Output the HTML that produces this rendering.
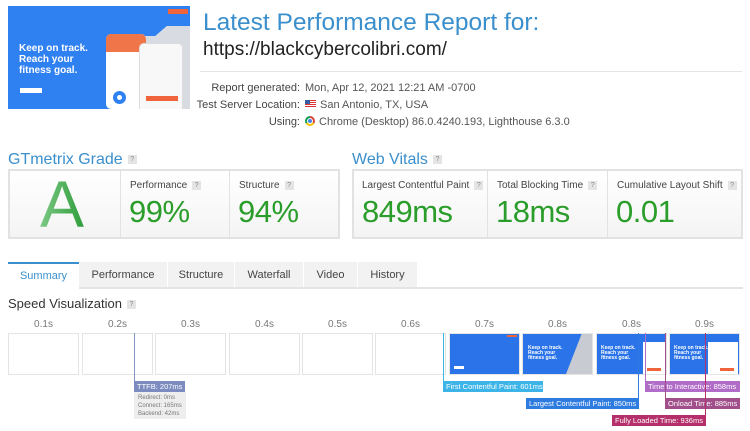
<!DOCTYPE html>
<html><head><meta charset="utf-8"><style>
*{box-sizing:border-box;margin:0;padding:0}
body{width:750px;height:431px;background:#fff;font-family:"Liberation Sans",sans-serif;position:relative;overflow:hidden;color:#333}
.a{position:absolute}
.q{display:inline-block;width:9px;height:9px;background:#e4e4e4;color:#888;font-size:7px;line-height:9px;text-align:center;vertical-align:middle;margin-left:5px}
.h{color:#3a8fcc;font-size:16px}
.box{border:2px solid #e2e2e2;background:linear-gradient(#fff,#f4f4f4)}
.cell{position:absolute;top:0;bottom:0;border-right:1px solid #e2e2e2}
.lbl{position:absolute;top:9px;left:9px;font-size:10px;color:#444;white-space:nowrap}
.val{position:absolute;top:23px;left:8px;font-size:31px;color:#2a9d2a;letter-spacing:-0.5px}
.tab{position:absolute;top:262px;height:26px;background:#f2f2f2;font-size:11px;color:#444;text-align:center;line-height:26px}
.fr{position:absolute;top:333px;height:42px;border:1px solid #e4e4e4;background:#fff;overflow:hidden}
.tl{position:absolute;top:319px;font-size:10px;color:#777;width:71px;text-align:center}
.mk{position:absolute;color:#fff;font-size:7.5px;height:11px;line-height:11px;padding:0 3px;white-space:nowrap;overflow:hidden}
.ln{position:absolute;width:1px}
.row{position:absolute;font-size:11px;color:#555;white-space:nowrap}
.row b{font-weight:normal;display:inline-block;width:110px;text-align:right;color:#444;margin-right:5px}
</style></head><body>
<div class="a" style="left:8px;top:6px;width:182px;height:103px;background:#2f80f0;overflow:hidden">
 <div class="a" style="left:120px;top:20px;width:62px;height:83px;background:#d8dce2"></div>
 <div class="a" style="left:95px;top:0;width:87px;height:30px;background:#2f80f0;clip-path:polygon(0 0,100% 0,100% 0,60% 100%,0 100%)"></div>
 <div class="a" style="left:160px;top:3px;width:20px;height:5px;background:#f0643c"></div>
 <div class="a" style="left:11px;top:37px;color:#fff;font-weight:bold;font-size:10px;line-height:11px">Keep on track.<br>Reach your<br>fitness goal.</div>
 <div class="a" style="left:12px;top:82px;width:22px;height:5px;background:#fff"></div>
 <div class="a" style="left:98px;top:28px;width:40px;height:75px;background:#fff;border-radius:5px"></div>
 <div class="a" style="left:98px;top:28px;width:40px;height:18px;background:#f0764a;border-radius:5px 5px 0 0"></div>
 <div class="a" style="left:131px;top:37px;width:44px;height:70px;background:#f8f8f8;border-radius:5px;border:1px solid #ddd"></div>
 <div class="a" style="left:138px;top:90px;width:32px;height:5px;background:#f0643c"></div>
 <div class="a" style="left:105px;top:85px;width:13px;height:13px;border:4px solid #2f80f0;border-radius:50%"></div>
</div>
<div class="a" style="left:203px;top:9px;font-size:24.5px;color:#3a8fcc;white-space:nowrap">Latest Performance Report for:</div>
<div class="a" style="left:203px;top:39px;font-size:19px;color:#222;white-space:nowrap">https://blackcybercolibri.com/</div>
<div class="a" style="left:200px;top:71px;width:542px;height:1px;background:#e4e4e4"></div>
<div class="row" style="left:190px;top:82px"><b>Report generated:</b>Mon, Apr 12, 2021 12:21 AM -0700</div>
<div class="row" style="left:190px;top:99px"><b>Test Server Location:</b><span style="display:inline-block;width:11px;height:8px;background:repeating-linear-gradient(#d33 0 1px,#fff 1px 2px);position:relative;margin-right:4px"><span style="position:absolute;left:0;top:0;width:5px;height:4px;background:#3b5ba0"></span></span>San Antonio, TX, USA</div>
<div class="row" style="left:190px;top:116px"><b>Using:</b><span style="display:inline-block;width:10px;height:10px;border-radius:50%;background:conic-gradient(#db4437 0 120deg,#f4c20d 120deg 240deg,#0f9d58 240deg);vertical-align:-1px;margin-right:4px;position:relative"><span style="position:absolute;left:3px;top:3px;width:4px;height:4px;border-radius:50%;background:#4285f4;outline:1px solid #fff"></span></span>Chrome (Desktop) 86.0.4240.193, Lighthouse 6.3.0</div>

<div class="a h" style="left:8px;top:151px">GTmetrix Grade<span class="q">?</span></div>
<div class="a box" style="left:8px;top:169px;width:332px;height:70px">
 <div class="cell" style="left:0;width:111px"><div class="a" style="left:30px;top:-5px;font-size:66px;color:#4cb158;background:linear-gradient(90deg,#7cc884,#2f9e3c);-webkit-background-clip:text;background-clip:text;-webkit-text-fill-color:transparent">A</div></div>
 <div class="cell" style="left:111px;width:109px"><div class="lbl">Performance<span class="q">?</span></div><div class="val">99%</div></div>
 <div class="cell" style="left:220px;width:110px;border:0"><div class="lbl">Structure<span class="q">?</span></div><div class="val">94%</div></div>
</div>
<div class="a h" style="left:352px;top:151px">Web Vitals<span class="q">?</span></div>
<div class="a box" style="left:352px;top:169px;width:391px;height:70px">
 <div class="cell" style="left:0;width:134px"><div class="lbl" style="left:8px">Largest Contentful Paint<span class="q">?</span></div><div class="val">849ms</div></div>
 <div class="cell" style="left:134px;width:120px"><div class="lbl">Total Blocking Time<span class="q">?</span></div><div class="val">18ms</div></div>
 <div class="cell" style="left:254px;width:135px;border:0"><div class="lbl">Cumulative Layout Shift<span class="q">?</span></div><div class="val">0.01</div></div>
</div>

<div class="tab" style="left:8px;width:71px;background:#fff;border-top:2px solid #3a8fcc;color:#3a8fcc;line-height:24px">Summary</div>
<div class="tab" style="left:79px;width:88px">Performance</div>
<div class="tab" style="left:168px;width:66px">Structure</div>
<div class="tab" style="left:235px;width:68px">Waterfall</div>
<div class="tab" style="left:304px;width:53px">Video</div>
<div class="tab" style="left:358px;width:59px">History</div>
<div class="a" style="left:79px;top:287px;width:664px;height:2px;background:#e4e4e4"></div>

<div class="a" style="left:8px;top:296px;font-size:13px;color:#333">Speed Visualization<span class="q">?</span></div>
<div class="tl" style="left:8px">0.1s</div><div class="tl" style="left:82px">0.2s</div><div class="tl" style="left:155px">0.3s</div><div class="tl" style="left:229px">0.4s</div><div class="tl" style="left:302px">0.5s</div><div class="tl" style="left:375px">0.6s</div><div class="tl" style="left:449px">0.7s</div><div class="tl" style="left:522px">0.8s</div><div class="tl" style="left:596px">0.8s</div><div class="tl" style="left:669px">0.9s</div>
<div class="fr" style="left:8px;width:71px"></div><div class="fr" style="left:82px;width:71px"></div><div class="fr" style="left:155px;width:71px"></div><div class="fr" style="left:229px;width:71px"></div><div class="fr" style="left:302px;width:71px"></div><div class="fr" style="left:375px;width:71px"></div>
<div class="fr" style="left:449px;width:71px;background:#2a73e8"><div class="a" style="left:4px;top:32px;width:10px;height:3px;background:#fff"></div><div class="a" style="right:2px;top:1px;width:10px;height:2px;background:#f0643c"></div></div>
<div class="fr" style="left:522px;width:71px;background:#2a73e8"><div class="a" style="left:5px;top:12px;color:#fff;font-size:5px;font-weight:bold;line-height:5px">Keep on track.<br>Reach your<br>fitness goal.</div><div class="a" style="right:0;top:0;width:26px;height:40px;background:#c8ccd2;clip-path:polygon(100% 0,60% 0,0 100%,100% 100%)"></div></div>
<div class="fr" style="left:596px;width:71px;background:#2a73e8"><div class="a" style="left:4px;top:12px;color:#fff;font-size:5px;font-weight:bold;line-height:5px">Keep on track.<br>Reach your<br>fitness goal.</div><div class="a" style="left:46px;top:8px;width:22px;height:32px;background:#fff"></div><div class="a" style="left:50px;top:34px;width:14px;height:3px;background:#f0643c"></div></div>
<div class="fr" style="left:669px;width:71px;background:#2a73e8"><div class="a" style="left:4px;top:12px;color:#fff;font-size:5px;font-weight:bold;line-height:5px">Keep on track.<br>Reach your<br>fitness goal.</div><div class="a" style="left:38px;top:8px;width:30px;height:32px;background:#fff"></div><div class="a" style="left:50px;top:34px;width:14px;height:3px;background:#f0643c"></div></div>

<div class="ln" style="left:134px;top:333px;height:48px;background:#8494c4"></div>
<div class="mk" style="left:134px;top:381px;background:#7c8cc0">TTFB: 207ms</div>
<div class="a" style="left:134px;top:392px;width:52px;height:27px;background:#eee;font-size:6px;color:#777;line-height:8px;padding:2px 4px">Redirect: 0ms<br>Connect: 165ms<br>Backend: 42ms</div>
<div class="ln" style="left:443px;top:333px;height:48px;background:#3cb4e8"></div>
<div class="mk" style="left:443px;top:381px;width:100px;background:#3cb4e8">First Contentful Paint: 601ms</div>
<div class="ln" style="left:638px;top:333px;height:65px;background:#2f7ce0"></div>
<div class="mk" style="left:526px;top:398px;width:113px;background:#2f7ce0">Largest Contentful Paint: 850ms</div>
<div class="ln" style="left:645px;top:333px;height:48px;background:#b06cc7"></div>
<div class="mk" style="left:645px;top:381px;width:95px;background:#b06cc7">Time to Interactive: 858ms</div>
<div class="ln" style="left:665px;top:333px;height:65px;background:#a04f8a"></div>
<div class="mk" style="left:665px;top:398px;width:75px;background:#a04f8a">Onload Time: 885ms</div>
<div class="ln" style="left:705px;top:333px;height:82px;background:#b5306a"></div>
<div class="mk" style="left:612px;top:415px;width:94px;background:#b5306a">Fully Loaded Time: 936ms</div>
</body></html>
